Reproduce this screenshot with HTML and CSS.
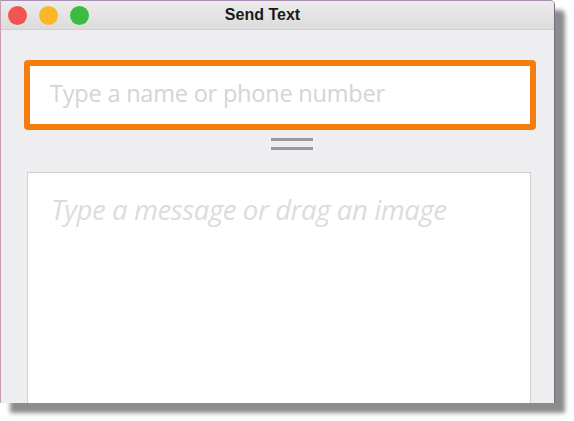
FILE: index.html
```html
<!DOCTYPE html>
<html>
<head>
<meta charset="utf-8">
<link rel="stylesheet" href="styles.css">
</head>
<body>
<div class="window">
  <div class="titlebar">
    <div class="lights">
      <span class="light red"></span>
      <span class="light yellow"></span>
      <span class="light green"></span>
    </div>
    <div class="title">Send Text</div>
  </div>
  <div class="content">
    <div class="recipient">
      <span class="placeholder">Type a name or phone number</span>
    </div>
    <div class="handle">
      <span class="bar"></span>
      <span class="bar"></span>
    </div>
    <div class="message">
      <span class="msg-placeholder">Type a message or drag an image</span>
    </div>
  </div>
</div>
</body>
</html>
```
FILE: styles.css
```css
html, body {
  margin: 0;
  padding: 0;
  background: #ffffff;
}
body {
  width: 574px;
  height: 421px;
  overflow: hidden;
}
.window {
  width: 553px;
  height: 402px;
  border-left: 1px solid #c89cb4;
  border-top: 1px solid #a88fb6;
  border-right: 1px solid #7a6a8a;
  border-top-right-radius: 5px;
  background: #eeeef0;
  box-shadow: 10px 10px 4px rgba(0,0,0,0.45);
  display: flex;
  flex-direction: column;
  overflow: hidden;
}
.titlebar {
  height: 28px;
  flex: none;
  display: grid;
  grid-template-columns: 1fr;
  align-items: center;
  background: linear-gradient(#ececec, #dcdcdc);
  border-bottom: 1px solid #d0d0d0;
}
.lights, .title {
  grid-row: 1;
  grid-column: 1;
}
.lights {
  display: flex;
  gap: 12px;
  padding-left: 7px;
}
.light {
  width: 19px;
  height: 19px;
  border-radius: 50%;
}
.red { background: #f0564f; }
.yellow { background: #fbb726; }
.green { background: #3bbb41; }
.title {
  text-align: center;
  font-family: "Liberation Sans", Arial, sans-serif;
  font-weight: bold;
  font-size: 16px;
  color: #1a1a1a;
  margin-left: -30px;
}
.content {
  flex: 1;
  display: flex;
  flex-direction: column;
  padding-top: 30px;
}
.recipient {
  margin-left: 23px;
  margin-right: 18px;
  height: 58px;
  border: 6px solid #f57c0e;
  border-radius: 4px;
  background: #ffffff;
  display: flex;
  align-items: center;
  padding-left: 20px;
}
.placeholder {
  font-family: "Open Sans", sans-serif;
  font-size: 23.5px;
  color: #d4d4d6;
  letter-spacing: -0.2px;
  margin-top: -4px;
}
.handle {
  height: 42px;
  display: flex;
  flex-direction: column;
  align-items: center;
  gap: 6px;
  padding-top: 8px;
  box-sizing: border-box;
  margin-left: 29px;
}
.bar {
  width: 42px;
  height: 3px;
  background: #9a9a9c;
}
.message {
  flex: 1;
  margin-left: 26px;
  margin-right: 23px;
  border: 1px solid #cfcfd1;
  border-bottom: none;
  background: #ffffff;
  padding: 18px 0 0 23px;
}
.msg-placeholder {
  font-family: "Open Sans", sans-serif;
  font-style: italic;
  font-size: 27.5px;
  color: #dcdcde;
  letter-spacing: -0.4px;
}
```
